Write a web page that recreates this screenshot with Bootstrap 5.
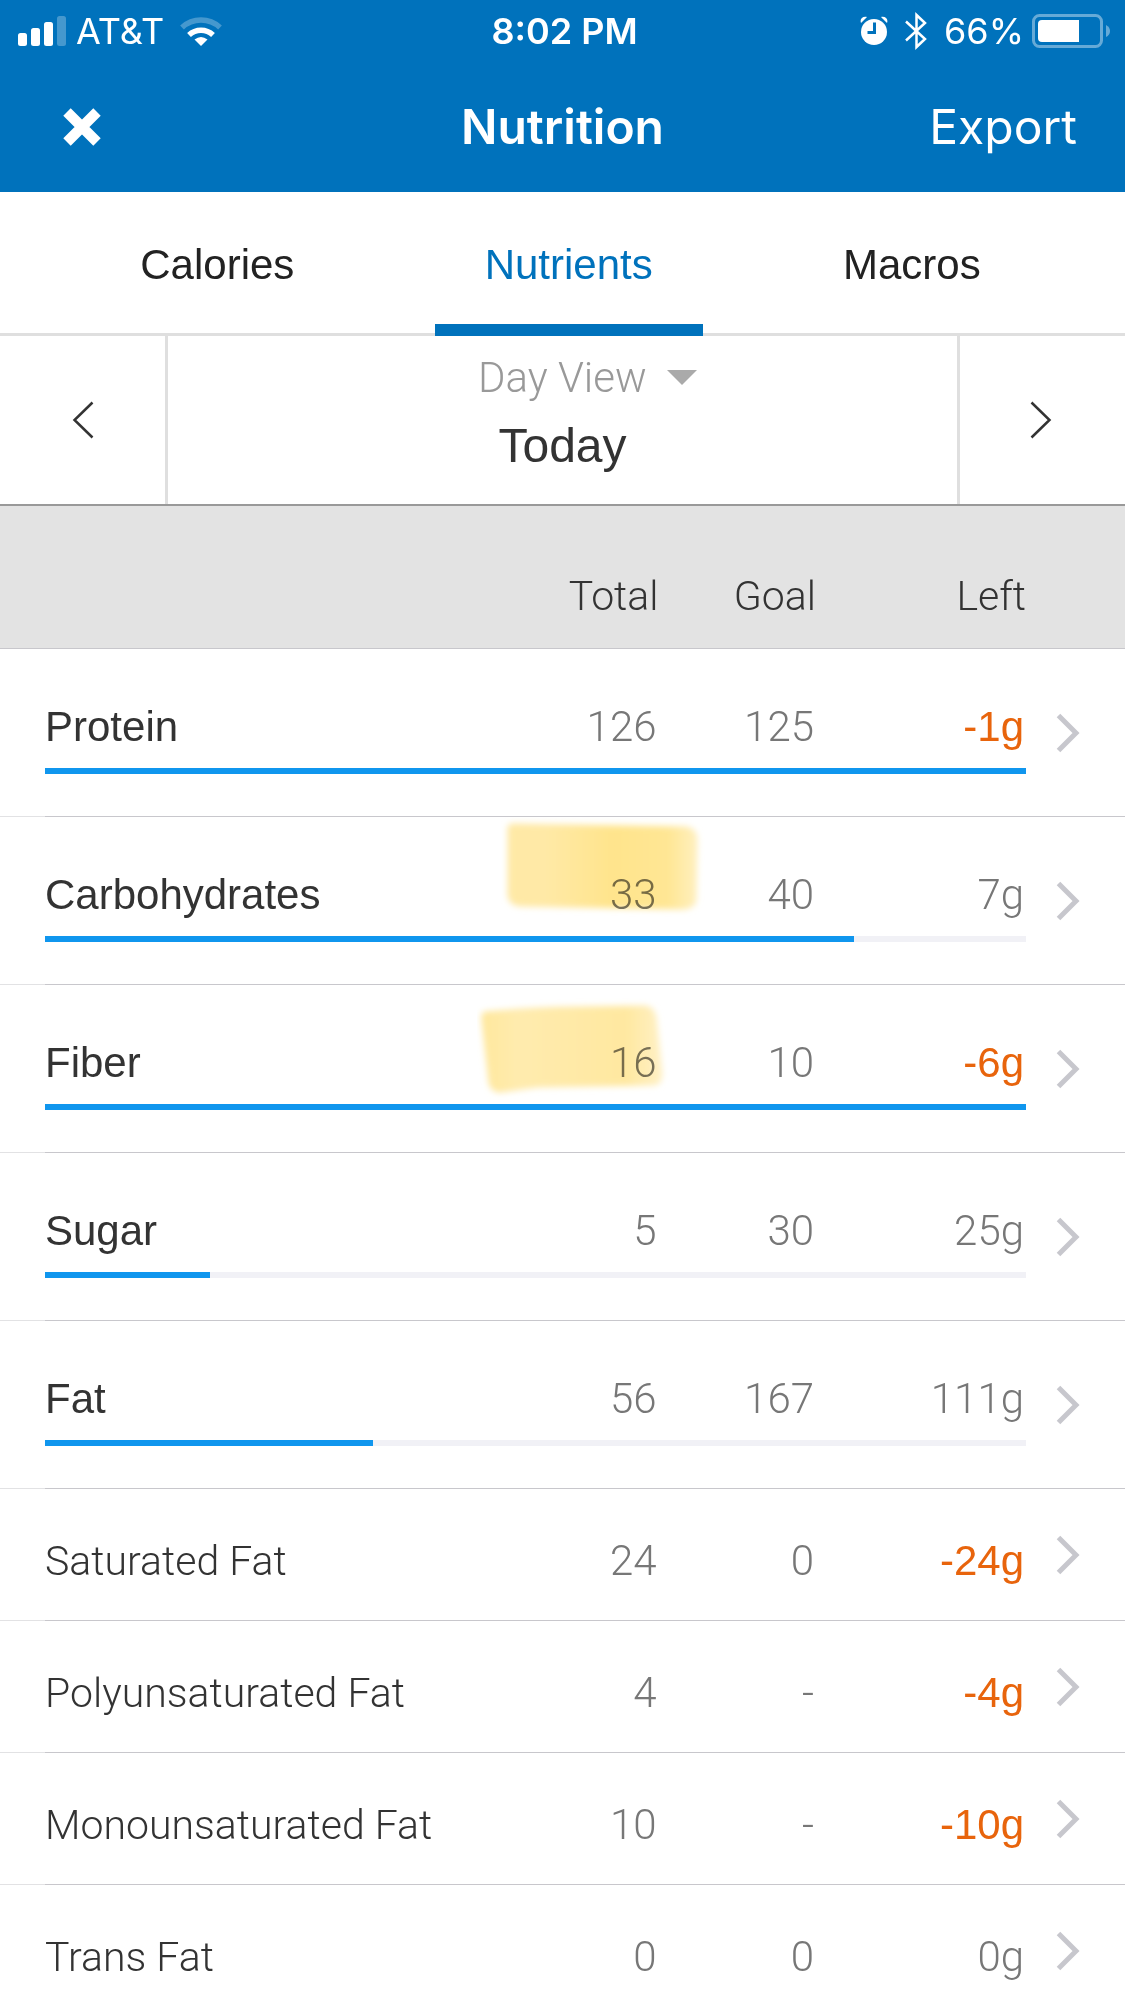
<!DOCTYPE html>
<html lang="en">
<head>
<meta charset="utf-8">
<meta name="viewport" content="width=device-width, initial-scale=1">
<title>Nutrition</title>
<link href="https://cdn.jsdelivr.net/npm/bootstrap@5.3.0/dist/css/bootstrap.min.css" rel="stylesheet">
<style>
  :root { --brand: #0072bc; --ink: #333; --quiet: #777; --over: #e8640c; --line: #c8c7cc; --rule: #dfdfdf; }
  body { font-family: "Liberation Sans", Arial, sans-serif; font-size: 42px; line-height: 50px; color: var(--ink); background: #fff; }
  svg { display: block; flex: none; }
  .light-face { font-family: Roboto, "Liberation Sans", sans-serif; font-weight: 300; }

  /* header */
  .app-head { background: var(--brand); font-family: Inter, "Liberation Sans", sans-serif; }
  .thirds { display: grid; grid-template-columns: 1fr auto 1fr; align-items: center; }
  .status-line { height: 62px; padding: 0 14px 0 18px; font-size: 36px; line-height: 44px; }
  .title-line { height: 130px; padding: 0 48px; font-size: 48px; line-height: 60px; }
  .title-line h1 { font-size: 48px; line-height: 60px; }
  .close-btn { padding-left: 14px !important; }
  .plain { background: none; border: 0; padding: 0; color: inherit; font: inherit; }

  /* tabs */
  .view-tabs { height: 144px; border-bottom: 3px solid var(--rule); }
  .view-tabs .nav-link { height: 144px; padding: 48px 50px 0; color: #222; border-bottom: 12px solid transparent; }
  .view-tabs .nav-link.active { color: var(--brand); border-bottom-color: var(--brand); }

  /* day picker */
  .day-picker { border-bottom: 2px solid #999; height: 170px; }
  .day-step { width: 168px; display: flex; align-items: center; justify-content: center; }
  .step-back { border-right: 3px solid var(--rule); }
  .step-next { border-left: 3px solid var(--rule); padding-right: 4px; }
  .range-select { display: block; appearance: none; border: 0; background: none; padding: 0 50px; color: #999; font-size: 42px; line-height: 52px; height: 52px; }
  .range-caret { position: absolute; right: 0; top: 18px; pointer-events: none; }
  .day-name { font-size: 48px; line-height: 52px; }

  /* nutrient table */
  .nutrients { table-layout: fixed; color: var(--ink); --bs-table-bg: transparent; }
  .nutrients > :not(caption) > * > * { padding: 0; font-weight: 400; }
  .nutrients thead { background: #e3e3e3; border-bottom: 1px solid var(--line); }
  .nutrients > thead > tr > th { padding: 65px 0 27px; font-weight: 300; font-size: 41px; }
  .c-total, .c-goal { width: 14%; }
  .c-left { width: 210px; }
  .c-go { width: 99px; }
  .item { background: linear-gradient(to right, #e2e2e4 45px, var(--line) 45px) bottom / 100% 1px no-repeat; }
  .nutrients > .item > .figures > * { padding: 47px 0 35px; }
  .nutrients > .tracked > .figures > * { padding: 53px 0 16px; }
  .nutrients > .item > .figures > .go-cell { padding: 0; vertical-align: middle; }
  .nutrients > .item > .figures > th { padding-left: 45px; }
  .nutrients > .item > .figures > th.light-face { font-size: 41px; font-weight: 300; }
  .nutrients > .item > .figures > .amount { padding-right: 2px; color: var(--quiet); font-weight: 300; }
  .nutrients > .item > .figures > .over { color: var(--over); font-weight: 400; }
  .nutrients > .item > .meter > td { padding: 0 0 43px 45px; }
  .progress { height: 6px; border-radius: 0; background: #f1f1f6; }
  .progress-bar { background: #1096ee; }
  .go-cell a { display: flex; padding-left: 30px; }
  .marker { position: absolute; mix-blend-mode: multiply; pointer-events: none; left: 0; top: 0; }
  .marker-low { left: -24px; top: 12px; }
</style>
<script src="https://cdn.jsdelivr.net/npm/bootstrap@5.3.0/dist/js/bootstrap.bundle.min.js"></script>
</head>
<body>
<svg width="0" height="0" class="position-absolute" aria-hidden="true">
  <symbol id="go" viewBox="0 0 24 40"><path d="M2.500 2.500 20 20 2.500 37.500" fill="none" stroke="#c7c7cd" stroke-width="5"/></symbol>
  <filter id="soft" x="-10%" y="-10%" width="120%" height="120%"><feGaussianBlur stdDeviation="3"/></filter>
  <linearGradient id="ink1"><stop offset="0" stop-color="#ffe9a6"/><stop offset=".2" stop-color="#ffe9a6"/><stop offset=".55" stop-color="#ffe48c"/><stop offset=".85" stop-color="#ffe694"/><stop offset="1" stop-color="#ffefbd"/></linearGradient>
  <linearGradient id="ink2"><stop offset="0" stop-color="#ffe89e"/><stop offset=".2" stop-color="#ffebae"/><stop offset=".8" stop-color="#ffe8a0"/><stop offset="1" stop-color="#fff0c4"/></linearGradient>
</svg>

<div class="vh-100 d-flex flex-column overflow-hidden">
  <header class="app-head text-white flex-shrink-0">
    <div class="status-line thirds">
      <div class="d-flex align-items-center">
        <svg width="50" height="32" viewBox="0 0 50 32" fill="#fff" role="img" aria-label="Signal"><rect x="0" y="18" width="9" height="13" rx="2.500"/><rect x="13" y="13" width="9" height="18" rx="2.500"/><rect x="26" y="7" width="9" height="24" rx="2.500"/><rect x="39" y="1" width="9" height="30" rx="2.500" opacity=".27"/></svg>
        <span class="ms-2">AT&amp;T</span>
        <svg class="ms-3" width="42" height="30" viewBox="0 0 42 30" fill="none" stroke="#fff" role="img" aria-label="Wi-Fi"><path d="M2 11.500A28 28 0 0 1 40 11.500" stroke-width="5.500" opacity=".27"/><path d="M9 19A17.500 17.500 0 0 1 33 19" stroke-width="5.500"/><path d="M21 30 14.500 23.500Q21 18.500 27.500 23.500Z" fill="#fff" stroke="none"/></svg>
      </div>
      <span class="fw-semibold">8:02 PM</span>
      <div class="d-flex align-items-center justify-content-end">
        <svg width="28" height="30" viewBox="0 0 28 30" role="img" aria-label="Alarm"><path d="M1 7C-.5 3 2.500 0 7 1ZM27 7C28.500 3 25.500 0 21 1Z" fill="#fff"/><circle cx="14" cy="16" r="13" fill="#fff"/><path d="M14.500 6.500V16.500H7.500" fill="none" stroke="#0072bc" stroke-width="3"/></svg>
        <svg class="mx-3" width="24" height="38" viewBox="-1 0 24 38" fill="none" stroke="#fff" stroke-width="2.500" role="img" aria-label="Bluetooth"><path d="M1 9.500 20 27 11.500 35V3L20 11 1 28.500"/></svg>
        <span class="me-2">66%</span>
        <svg width="79" height="36" viewBox="0 0 79 36" role="img" aria-label="Battery"><rect x="1.500" y="2.500" width="68" height="31" rx="6" fill="none" stroke="#fff" stroke-width="3" opacity=".4"/><path d="M10 7H47V29H10Q6 29 6 25V11Q6 7 10 7Z" fill="#fff"/><path d="M74 12Q78 14 78 18T74 24Z" fill="#fff" opacity=".4"/></svg>
      </div>
    </div>
    <div class="title-line thirds">
      <button type="button" class="plain close-btn text-start" aria-label="Close">
        <svg width="40" height="38" viewBox="0 0 40 38"><path d="M5 4 35 34M35 4 5 34" stroke="#fff" stroke-width="10.500"/></svg>
      </button>
      <h1 class="m-0 fw-semibold">Nutrition</h1>
      <button type="button" class="plain text-end">Export</button>
    </div>
  </header>

  <nav class="view-tabs nav justify-content-evenly flex-nowrap flex-shrink-0 pe-1">
    <a class="nav-link" href="#calories">Calories</a>
    <a class="nav-link active" aria-current="page" href="#nutrients">Nutrients</a>
    <a class="nav-link" href="#macros">Macros</a>
  </nav>

  <section class="day-picker d-flex flex-shrink-0">
    <button type="button" class="plain day-step step-back" aria-label="Previous day"><svg width="22" height="38" viewBox="0 0 22 38"><path d="M20.500 1.500 2.500 19 20.500 36.500" fill="none" stroke="#333" stroke-width="2.500"/></svg></button>
    <div class="flex-fill d-flex flex-column align-items-center pt-3 gap-3">
      <div class="position-relative">
        <select class="range-select light-face" aria-label="Range"><option>Day View</option></select>
        <svg class="range-caret" width="30" height="16" viewBox="0 0 30 16"><path d="M0 0H30L15 15Z" fill="#aaa"/></svg>
      </div>
      <div class="day-name">Today</div>
    </div>
    <button type="button" class="plain day-step step-next" aria-label="Next day"><svg width="22" height="38" viewBox="0 0 22 38"><path d="M1.500 1.500 19.500 19 1.500 36.500" fill="none" stroke="#333" stroke-width="2.500"/></svg></button>
  </section>

  <main class="flex-fill overflow-hidden">
    <table class="table table-borderless nutrients mb-0">
      <colgroup><col><col class="c-total"><col class="c-goal"><col class="c-left"><col class="c-go"></colgroup>
      <thead>
        <tr class="light-face text-end"><th scope="col" aria-label="Nutrient"></th><th scope="col">Total</th><th scope="col">Goal</th><th scope="col">Left</th><th></th></tr>
      </thead>
      <tbody class="item tracked">
        <tr class="figures text-end">
          <th scope="row" class="text-start">Protein</th><td class="amount light-face">126</td><td class="amount light-face">125</td><td class="amount over">-1g</td>
          <td class="go-cell text-start" rowspan="2"><a href="#protein" aria-label="Protein details"><svg width="24" height="40"><use href="#go"/></svg></a></td>
        </tr>
        <tr class="meter"><td colspan="4"><div class="progress" role="progressbar" aria-label="Protein"><div class="progress-bar" style="width:100%"></div></div></td></tr>
      </tbody>
      <tbody class="item tracked">
        <tr class="figures text-end">
          <th scope="row" class="text-start">Carbohydrates</th>
          <td class="amount light-face position-relative">33<svg class="marker" width="204" height="100" viewBox="0 0 204 100"><path d="M11 8 185 11Q195 13 195 22L194 84Q192 90 183 91L19 88Q9 87 8 78L8 16Q7 9 11 8Z" fill="url(#ink1)" stroke="url(#ink1)" stroke-width="3" filter="url(#soft)"/></svg></td>
          <td class="amount light-face">40</td><td class="amount light-face">7g</td>
          <td class="go-cell text-start" rowspan="2"><a href="#carbohydrates" aria-label="Carbohydrates details"><svg width="24" height="40"><use href="#go"/></svg></a></td>
        </tr>
        <tr class="meter"><td colspan="4"><div class="progress" role="progressbar" aria-label="Carbohydrates"><div class="progress-bar" style="width:82.5%"></div></div></td></tr>
      </tbody>
      <tbody class="item tracked">
        <tr class="figures text-end">
          <th scope="row" class="text-start">Fiber</th>
          <td class="amount light-face position-relative">16<svg class="marker marker-low" width="196" height="104" viewBox="0 0 196 104"><path d="M8 16Q60 11 100 11L168 10Q176 11 178 20L184 76Q184 87 176 87L60 89 24 94Q16 95 13 86L6 24Q5 17 8 16Z" fill="url(#ink2)" stroke="url(#ink2)" stroke-width="3" filter="url(#soft)"/></svg></td>
          <td class="amount light-face">10</td><td class="amount over">-6g</td>
          <td class="go-cell text-start" rowspan="2"><a href="#fiber" aria-label="Fiber details"><svg width="24" height="40"><use href="#go"/></svg></a></td>
        </tr>
        <tr class="meter"><td colspan="4"><div class="progress" role="progressbar" aria-label="Fiber"><div class="progress-bar" style="width:100%"></div></div></td></tr>
      </tbody>
      <tbody class="item tracked">
        <tr class="figures text-end">
          <th scope="row" class="text-start">Sugar</th><td class="amount light-face">5</td><td class="amount light-face">30</td><td class="amount light-face">25g</td>
          <td class="go-cell text-start" rowspan="2"><a href="#sugar" aria-label="Sugar details"><svg width="24" height="40"><use href="#go"/></svg></a></td>
        </tr>
        <tr class="meter"><td colspan="4"><div class="progress" role="progressbar" aria-label="Sugar"><div class="progress-bar" style="width:16.8%"></div></div></td></tr>
      </tbody>
      <tbody class="item tracked">
        <tr class="figures text-end">
          <th scope="row" class="text-start">Fat</th><td class="amount light-face">56</td><td class="amount light-face">167</td><td class="amount light-face">111g</td>
          <td class="go-cell text-start" rowspan="2"><a href="#fat" aria-label="Fat details"><svg width="24" height="40"><use href="#go"/></svg></a></td>
        </tr>
        <tr class="meter"><td colspan="4"><div class="progress" role="progressbar" aria-label="Fat"><div class="progress-bar" style="width:33.4%"></div></div></td></tr>
      </tbody>
      <tbody class="item">
        <tr class="figures text-end">
          <th scope="row" class="text-start light-face">Saturated Fat</th><td class="amount light-face">24</td><td class="amount light-face">0</td><td class="amount over">-24g</td>
          <td class="go-cell text-start"><a href="#saturated" aria-label="Saturated Fat details"><svg width="24" height="40"><use href="#go"/></svg></a></td>
        </tr>
      </tbody>
      <tbody class="item">
        <tr class="figures text-end">
          <th scope="row" class="text-start light-face">Polyunsaturated Fat</th><td class="amount light-face">4</td><td class="amount light-face">-</td><td class="amount over">-4g</td>
          <td class="go-cell text-start"><a href="#polyunsaturated" aria-label="Polyunsaturated Fat details"><svg width="24" height="40"><use href="#go"/></svg></a></td>
        </tr>
      </tbody>
      <tbody class="item">
        <tr class="figures text-end">
          <th scope="row" class="text-start light-face">Monounsaturated Fat</th><td class="amount light-face">10</td><td class="amount light-face">-</td><td class="amount over">-10g</td>
          <td class="go-cell text-start"><a href="#monounsaturated" aria-label="Monounsaturated Fat details"><svg width="24" height="40"><use href="#go"/></svg></a></td>
        </tr>
      </tbody>
      <tbody class="item">
        <tr class="figures text-end">
          <th scope="row" class="text-start light-face">Trans Fat</th><td class="amount light-face">0</td><td class="amount light-face">0</td><td class="amount light-face">0g</td>
          <td class="go-cell text-start"><a href="#trans" aria-label="Trans Fat details"><svg width="24" height="40"><use href="#go"/></svg></a></td>
        </tr>
      </tbody>
    </table>
  </main>
</div>
</body>
</html>
